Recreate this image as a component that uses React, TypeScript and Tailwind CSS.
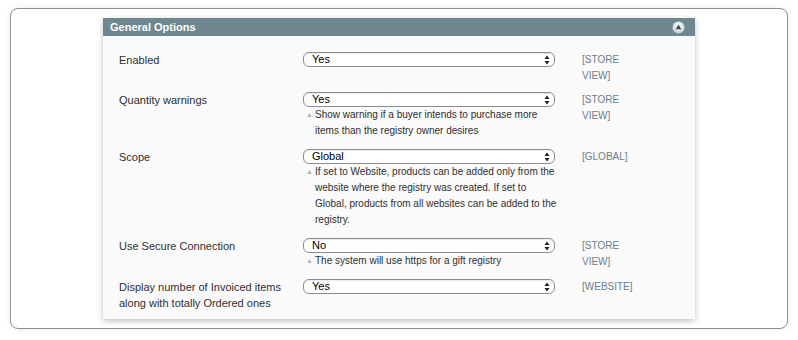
import React from "react";

const rows: { label: string[]; value: string; notes?: string[]; scope: string[] }[] = [
  { label: ["Enabled"], value: "Yes", scope: ["[STORE", "VIEW]"] },
  {
    label: ["Quantity warnings"],
    value: "Yes",
    notes: ["Show warning if a buyer intends to purchase more", "items than the registry owner desires"],
    scope: ["[STORE", "VIEW]"],
  },
  {
    label: ["Scope"],
    value: "Global",
    notes: [
      "If set to Website, products can be added only from the",
      "website where the registry was created. If set to",
      "Global, products from all websites can be added to the",
      "registry.",
    ],
    scope: ["[GLOBAL]"],
  },
  {
    label: ["Use Secure Connection"],
    value: "No",
    notes: ["The system will use https for a gift registry"],
    scope: ["[STORE", "VIEW]"],
  },
  {
    label: ["Display number of Invoiced items", "along with totally Ordered ones"],
    value: "Yes",
    scope: ["[WEBSITE]"],
  },
];

function Select({ value }: { value: string }) {
  return (
    <div className="relative flex h-[15px] w-[252px] items-center rounded-[6px] border border-[#8c8c8c] bg-white pl-[8px] text-[11px] leading-none text-black shadow-[inset_0_1px_1px_rgba(0,0,0,0.08)]">
      <span>{value}</span>
      <svg className="absolute right-[4px] top-[2px]" width="6" height="10" viewBox="0 0 6 10">
        <path d="M3 0.5 L5.5 4 L0.5 4 Z" fill="#222" />
        <path d="M3 9.5 L5.5 6 L0.5 6 Z" fill="#222" />
      </svg>
    </div>
  );
}

export default function App() {
  return (
    <div
      className="h-[340px] w-[798px] bg-white pl-[10px] pt-[8px]"
      style={{ fontFamily: '"Liberation Sans", Arial, sans-serif' }}
    >
      <div className="h-[321px] w-[778px] rounded-[8px] border border-[#8f8f8f] bg-white pl-[92px] pt-[9px] shadow-[0_0_6px_rgba(0,0,0,0.08)]">
        <div className="w-[592px] bg-[#fafafa] pb-[4px] shadow-[0_2px_6px_rgba(0,0,0,0.25)]">
          <div className="flex h-[18px] items-center justify-between bg-[#6f878f] pl-[7px] pr-[10px]">
            <span className="text-[11px] font-bold leading-none text-white">General Options</span>
            <svg width="13" height="13" viewBox="0 0 13 13">
              <defs>
                <radialGradient id="g" cx="50%" cy="35%" r="60%">
                  <stop offset="0%" stopColor="#ffffff" />
                  <stop offset="100%" stopColor="#c9d1d4" />
                </radialGradient>
              </defs>
              <circle cx="6.5" cy="6.5" r="6" fill="url(#g)" />
              <path d="M6.5 3.5 L9.3 8.3 L3.7 8.3 Z" fill="#3b4a50" />
            </svg>
          </div>
          <div className="flex flex-col pt-[12px]">
            {rows.map((r, i) => (
              <div key={i} className="flex py-[4px] pl-[16px] text-[11px] leading-[16px]">
                <div className="w-[184px] text-[#2f2f2f]">
                  {r.label.map((l, j) => (
                    <div key={j}>{l}</div>
                  ))}
                </div>
                <div className="w-[252px]">
                  <Select value={r.value} />
                  {r.notes && (
                    <div className="relative whitespace-nowrap pb-[2px] pl-[12px] text-[10px] leading-[16px] text-[#2f2f2f]">
                      <span className="absolute left-[3px] top-[0px] text-[7px] text-[#a9b4b8]">▲</span>
                      {r.notes.map((n, j) => (
                        <div key={j}>{n}</div>
                      ))}
                    </div>
                  )}
                </div>
                <div className="ml-[27px] text-[10px] leading-[16px] text-[#6b7e8b]">
                  {r.scope.map((s, j) => (
                    <div key={j}>{s}</div>
                  ))}
                </div>
              </div>
            ))}
          </div>
        </div>
      </div>
    </div>
  );
}
